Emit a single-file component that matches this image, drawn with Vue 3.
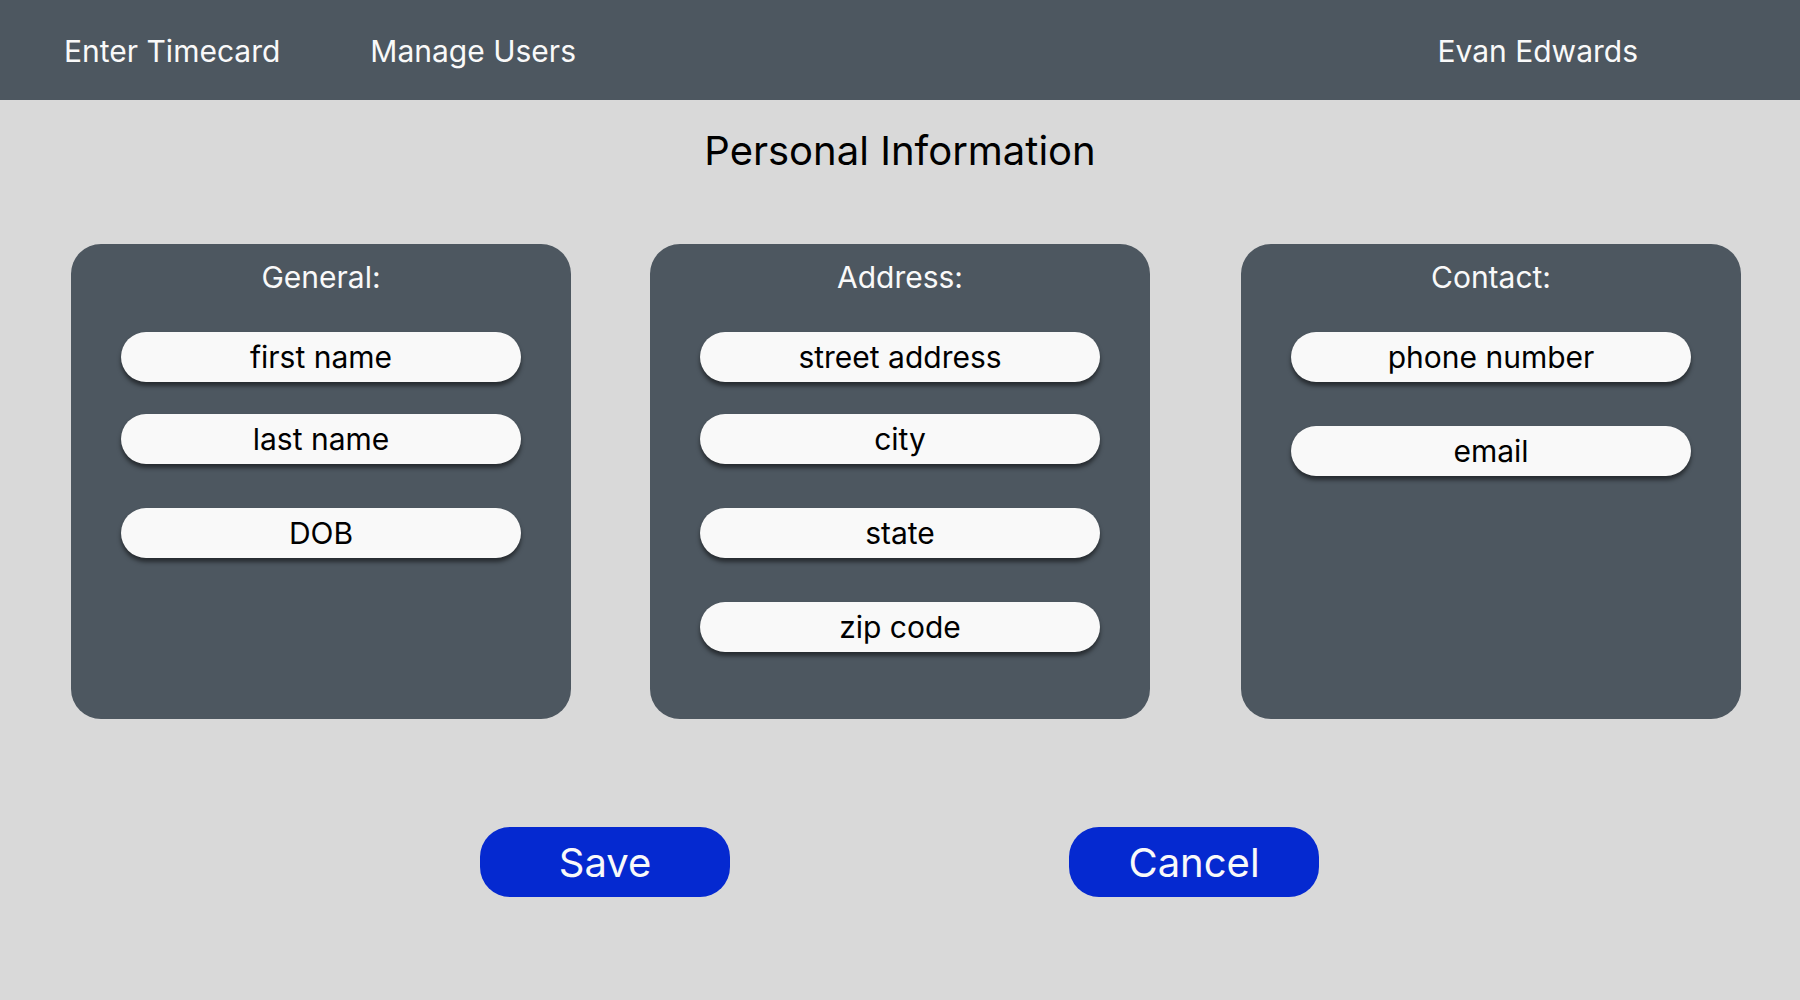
<script setup>
const groups = [
  {
    id: 'general',
    title: 'General:',
    fields: [
      { id: 'first-name', label: 'first name', autocomplete: 'given-name', tight: true },
      { id: 'last-name', label: 'last name', autocomplete: 'family-name' },
      { id: 'dob', label: 'DOB', autocomplete: 'bday' },
    ],
  },
  {
    id: 'address',
    title: 'Address:',
    fields: [
      { id: 'street-address', label: 'street address', autocomplete: 'street-address', tight: true },
      { id: 'city', label: 'city', autocomplete: 'address-level2' },
      { id: 'state', label: 'state', autocomplete: 'address-level1' },
      { id: 'zip-code', label: 'zip code', autocomplete: 'postal-code' },
    ],
  },
  {
    id: 'contact',
    title: 'Contact:',
    fields: [
      { id: 'phone-number', label: 'phone number', autocomplete: 'tel' },
      { id: 'email', label: 'email', autocomplete: 'email' },
    ],
  },
]
</script>

<template>
  <div class="page">
    <header class="topbar">
      <nav class="nav">
        <a href="#timecard">Enter Timecard</a>
        <a href="#users">Manage Users</a>
      </nav>
      <a class="account" href="#account">Evan Edwards</a>
    </header>

    <main>
      <h1>Personal Information</h1>
      <form @submit.prevent>
        <div class="cards">
          <section
            v-for="group in groups"
            :key="group.id"
            class="card"
            :class="group.id"
            :aria-labelledby="group.id"
          >
            <h2 :id="group.id">{{ group.title }}</h2>
            <div class="fields">
              <input
                v-for="field in group.fields"
                :id="field.id"
                :key="field.id"
                type="text"
                :class="{ tight: field.tight }"
                :placeholder="field.label"
                :aria-label="field.label"
                :autocomplete="field.autocomplete"
              />
            </div>
          </section>
        </div>
        <div class="actions">
          <button type="submit">Save</button>
          <button type="button">Cancel</button>
        </div>
      </form>
    </main>
  </div>
</template>

<style>
body {
  background: #d9d9d9;
}
</style>

<style scoped>
.page {
  box-sizing: border-box;
  min-height: 100vh;
  font-family: Inter, "Liberation Sans", sans-serif;
  font-size: 30px;
  line-height: 36px;
  color: #000;
}

.topbar {
  display: flex;
  align-items: center;
  justify-content: space-between;
  box-sizing: border-box;
  min-height: 100px;
  padding: 2px 9% 0 64px;
  background: #4d5760;
}

.topbar a {
  color: #f9f9f9;
  text-decoration: none;
}

.nav {
  display: flex;
  gap: 90px;
}

h1,
h2 {
  margin: 0;
  font-weight: 400;
  text-align: center;
}

h1 {
  padding: 27px 0 69px;
  font-size: 40px;
  line-height: 48px;
}

.cards {
  display: grid;
  grid-template-columns:
    71fr [general] 500fr 79fr [address] 500fr 91fr [contact] 500fr 59fr;
}

.card {
  grid-row: 1;
  box-sizing: border-box;
  min-height: 475px;
  padding: 15px 50px 50px;
  border-radius: 30px;
  background: #4d5760;
}

.general {
  grid-column: general;
}

.address {
  grid-column: address;
}

.contact {
  grid-column: contact;
}

h2 {
  margin-bottom: 37px;
  font-size: 30px;
  color: #f9f9f9;
}

.fields {
  display: flex;
  flex-direction: column;
}

input {
  box-sizing: border-box;
  width: 100%;
  height: 50px;
  margin: 0 0 44px;
  padding: 0 25px;
  border: 0;
  border-radius: 25px;
  background: #f9f9f9;
  box-shadow: 0 4px 4px rgba(0, 0, 0, 0.5);
  color: #000;
  font: inherit;
  text-align: center;
}

input.tight {
  margin-bottom: 32px;
}

input:last-child {
  margin-bottom: 0;
}

input::placeholder {
  color: #000;
  opacity: 1;
}

.actions {
  display: flex;
  justify-content: center;
  gap: 339px;
  padding: 108px 1px 100px 0;
}

button {
  width: 250px;
  height: 70px;
  padding: 2px 0 0;
  border: 0;
  border-radius: 30px;
  background: #0529d0;
  color: #f9f9f9;
  font: inherit;
  font-size: 40px;
  line-height: 48px;
  cursor: pointer;
}
</style>
